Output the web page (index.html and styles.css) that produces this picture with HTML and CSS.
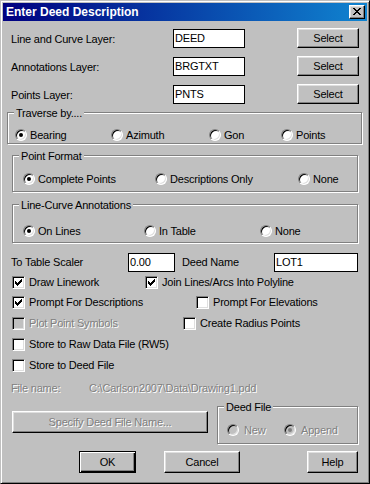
FILE: index.html
```html
<!DOCTYPE html>
<html lang="en">
<head>
    <meta charset="UTF-8">
    <title>Enter Deed Description</title>
    <link rel="stylesheet" href="styles.css">
</head>
<body>
    <div class="window">
        <div class="titlebar">
            <span class="title">Enter Deed Description</span>
            <span class="close-btn bevel">
                <svg width="8" height="7" viewBox="0 0 8 7"><path d="M0 0h2v1h-2zM6 0h2v1h-2zM1 1h2v1h-2zM5 1h2v1h-2zM2 2h4v1h-4zM3 3h2v1h-2zM2 4h4v1h-4zM1 5h2v1h-2zM5 5h2v1h-2zM0 6h2v1h-2zM6 6h2v1h-2z" fill="#000"/></svg>
            </span>
        </div>

        <div class="content">
            <div class="layer-row">
                <span class="layer-label">Line and Curve Layer:</span>
                <span class="edit layer-edit">DEED</span>
                <button class="btn bevel select-btn">Select</button>
            </div>
            <div class="layer-row">
                <span class="layer-label">Annotations Layer:</span>
                <span class="edit layer-edit">BRGTXT</span>
                <button class="btn bevel select-btn">Select</button>
            </div>
            <div class="layer-row">
                <span class="layer-label">Points Layer:</span>
                <span class="edit layer-edit">PNTS</span>
                <button class="btn bevel select-btn">Select</button>
            </div>

            <div class="group group-traverse">
                <div class="legend">Traverse by....</div>
                <div class="options">
                    <span class="opt"><span class="radio on"></span>Bearing</span>
                    <span class="opt"><span class="radio"></span>Azimuth</span>
                    <span class="opt"><span class="radio"></span>Gon</span>
                    <span class="opt"><span class="radio"></span>Points</span>
                </div>
            </div>

            <div class="group group-format">
                <div class="legend">Point Format</div>
                <div class="options">
                    <span class="opt"><span class="radio on"></span>Complete Points</span>
                    <span class="opt"><span class="radio"></span>Descriptions Only</span>
                    <span class="opt"><span class="radio"></span>None</span>
                </div>
            </div>

            <div class="group group-lines">
                <div class="legend">Line-Curve Annotations</div>
                <div class="options">
                    <span class="opt"><span class="radio on"></span>On Lines</span>
                    <span class="opt"><span class="radio"></span>In Table</span>
                    <span class="opt"><span class="radio"></span>None</span>
                </div>
            </div>

            <div class="scaler-row">
                <span class="scaler-label">To Table Scaler</span>
                <span class="edit scale-edit">0.00</span>
                <span class="deed-label">Deed Name</span>
                <span class="edit deed-edit">LOT1</span>
            </div>

            <div class="check-row row-a">
                <span class="check-item"><span class="check"><svg width="11" height="11" viewBox="1 1 11 11"><path d="M3 5h1v1h1v1h1v-1h1v-1h1v-1h1v-1h1v3h-1v1h-1v1h-1v1h-1v1h-1v-1h-1v-1h-1z" fill="#000"/></svg></span>Draw Linework</span>
                <span class="check-item"><span class="check"><svg width="11" height="11" viewBox="1 1 11 11"><path d="M3 5h1v1h1v1h1v-1h1v-1h1v-1h1v-1h1v3h-1v1h-1v1h-1v1h-1v1h-1v-1h-1v-1h-1z" fill="#000"/></svg></span>Join Lines/Arcs Into Polyline</span>
            </div>
            <div class="check-row row-b">
                <span class="check-item"><span class="check"><svg width="11" height="11" viewBox="1 1 11 11"><path d="M3 5h1v1h1v1h1v-1h1v-1h1v-1h1v-1h1v3h-1v1h-1v1h-1v1h-1v1h-1v-1h-1v-1h-1z" fill="#000"/></svg></span>Prompt For Descriptions</span>
                <span class="check-item"><span class="check"></span>Prompt For Elevations</span>
            </div>
            <div class="check-row row-c">
                <span class="check-item disabled"><span class="check off"></span>Plot Point Symbols</span>
                <span class="check-item"><span class="check"></span>Create Radius Points</span>
            </div>
            <div class="check-row row-d">
                <span class="check-item"><span class="check"></span>Store to Raw Data File (RW5)</span>
            </div>
            <div class="check-row row-e">
                <span class="check-item"><span class="check"></span>Store to Deed File</span>
            </div>

            <div class="file-row disabled">
                <span class="file-label">File name:</span>
                <span>C:\Carlson2007\Data\Drawing1.pdd</span>
            </div>

            <div class="deed-row">
                <button class="btn bevel specify-btn disabled">Specify Deed File Name...</button>
                <div class="group group-deed">
                    <div class="legend">Deed File</div>
                    <div class="options">
                        <span class="opt disabled"><span class="radio off"></span>New</span>
                        <span class="opt disabled"><span class="radio off on"></span>Append</span>
                    </div>
                </div>
            </div>

            <div class="footer">
                <button class="btn bevel default ok-btn">OK</button>
                <button class="btn bevel cancel-btn">Cancel</button>
                <button class="btn bevel help-btn">Help</button>
            </div>
        </div>
    </div>
</body>
</html>
```

FILE: styles.css
```css
body {
    margin: 0;
    background: #c0c0c0;
    font-family: "Liberation Sans", Arial, sans-serif;
    font-size: 11px;
    letter-spacing: -0.2px;
    color: #000;
}
.window {
    width: 370px;
    height: 484px;
    box-sizing: border-box;
    border: 1px solid;
    border-color: #c0c0c0 #000 #000 #c0c0c0;
    box-shadow: inset 1px 1px #fff, inset -1px -1px #808080;
    padding: 2px;
    background: #c0c0c0;
    display: flex;
    flex-direction: column;
}
.titlebar {
    height: 18px;
    display: flex;
    align-items: center;
    justify-content: space-between;
    padding: 0 2px 0 3px;
    background: linear-gradient(to right, #000080, #1084d0);
    color: #fff;
}
.title {
    font-weight: bold;
    font-size: 12px;
    letter-spacing: 0;
    line-height: 18px;
}
.bevel {
    border: 1px solid;
    border-color: #fff #000 #000 #fff;
    box-shadow: inset -1px -1px #808080, inset 1px 1px #dfdfdf;
    background: #c0c0c0;
}
.close-btn {
    width: 16px;
    height: 14px;
    box-sizing: border-box;
    display: flex;
    align-items: center;
    justify-content: center;
    padding-bottom: 1px;
}
.close-btn svg {
    display: block;
}
.content {
    flex: 1;
    padding: 7px 8px 0;
}

/* layer rows */
.layer-row {
    display: flex;
    height: 20px;
    margin-bottom: 8px;
}
.layer-label {
    width: 162px;
    padding-top: 2px;
    line-height: 18px;
}
.edit {
    box-sizing: border-box;
    height: 19px;
    border: 1px solid #000;
    background: #fff;
    padding: 0 1px;
    line-height: 17px;
    white-space: nowrap;
}
.layer-edit {
    width: 72px;
    margin-top: 1px;
}
.btn {
    font: inherit;
    letter-spacing: inherit;
    color: #000;
    padding: 0 0 1px;
    margin: 0;
    box-sizing: border-box;
    height: 22px;
}
.btn.default {
    border-color: #000;
    box-shadow: inset 1px 1px #fff, inset -1px -1px #000, inset -2px -2px #808080;
}
.select-btn {
    width: 62px;
    height: 20px;
    margin-left: auto;
}

/* group boxes */
.group {
    border: 1px solid #808080;
    box-shadow: 1px 1px 0 #fff, inset 1px 1px 0 #fff;
}
.legend {
    width: max-content;
    margin: -6px 0 0 6px;
    padding: 0 2px;
    line-height: 13px;
    background: #c0c0c0;
}
.options {
    display: grid;
    line-height: 16px;
}
.opt {
    display: flex;
    align-items: center;
    gap: 3px;
}
.radio {
    width: 12px;
    height: 12px;
    box-sizing: border-box;
    border-radius: 50%;
    border: 1px solid;
    border-color: #808080 #fff #fff #808080;
    box-shadow: inset 1px 1px #000, inset -1px -1px #dfdfdf;
    background: #fff;
    display: flex;
    align-items: center;
    justify-content: center;
    flex: none;
}
.radio.on::after {
    content: '';
    width: 4px;
    height: 4px;
    border-radius: 50%;
    background: #000;
}
.radio.off {
    background: #c0c0c0;
}
.radio.off.on::after {
    background: #808080;
}
.group-traverse {
    margin: 0 -3px 0 -4px;
}
.group-traverse .options {
    margin-top: 7px;
    padding-left: 7px;
    grid-template-columns: 96px 98px 72px auto;
}
.group-format {
    margin: 11px 1px 0;
    padding-bottom: 4px;
}
.group-format .options {
    margin-top: 8px;
    padding-left: 10px;
    grid-template-columns: 132px 143px auto;
}
.group-lines {
    margin: 12px 1px 0;
    padding-bottom: 3px;
}
.group-lines .options {
    margin-top: 11px;
    padding-left: 10px;
    grid-template-columns: 121px 116px auto;
}

/* scaler */
.scaler-row {
    display: flex;
    height: 19px;
    margin-top: 10px;
    line-height: 19px;
}
.scaler-label {
    width: 117px;
}
.scale-edit {
    width: 47px;
}
.deed-label {
    width: 92px;
    margin-left: 7px;
}
.deed-edit {
    width: 84px;
}

/* checkboxes */
.check-row {
    display: flex;
    height: 13px;
    margin-left: 1px;
    line-height: 13px;
}
.check-item {
    display: flex;
    align-items: center;
    gap: 4px;
}
.check {
    width: 13px;
    height: 13px;
    box-sizing: border-box;
    border: 1px solid;
    border-color: #808080 #fff #fff #808080;
    box-shadow: inset 1px 1px #000, inset -1px -1px #dfdfdf;
    background: #fff;
    flex: none;
}
.check svg {
    display: block;
}
.check.off {
    background: #c0c0c0;
}
.row-a { margin-top: 4px; }
.row-a .check-item:first-child { width: 133px; }
.row-b { margin-top: 7px; }
.row-b .check-item:first-child { width: 184px; }
.row-c { margin-top: 8px; }
.row-c .check-item:first-child { width: 171px; }
.row-d, .row-e { margin-top: 8px; }

.disabled {
    color: #808080;
    text-shadow: 1px 1px 0 #fff;
}

/* file */
.file-row {
    display: flex;
    margin-top: 10px;
    line-height: 13px;
}
.file-label {
    width: 78px;
}
.deed-row {
    display: flex;
    align-items: flex-start;
    margin-top: 11px;
}
.specify-btn {
    width: 196px;
    margin: 5px 0 0 1px;
}
.group-deed {
    width: 141px;
    box-sizing: border-box;
    margin: 0 1px 0 auto;
    padding-bottom: 5px;
}
.group-deed .options {
    margin-top: 8px;
    padding-left: 9px;
    grid-template-columns: 57px auto;
}
.group-deed .opt {
    gap: 5px;
}

/* footer */
.footer {
    display: flex;
    margin-top: 7px;
}
.ok-btn {
    width: 57px;
    margin-left: 68px;
}
.cancel-btn {
    width: 76px;
    margin-left: 28px;
}
.help-btn {
    width: 51px;
    margin-left: auto;
    margin-right: 1px;
}
```
